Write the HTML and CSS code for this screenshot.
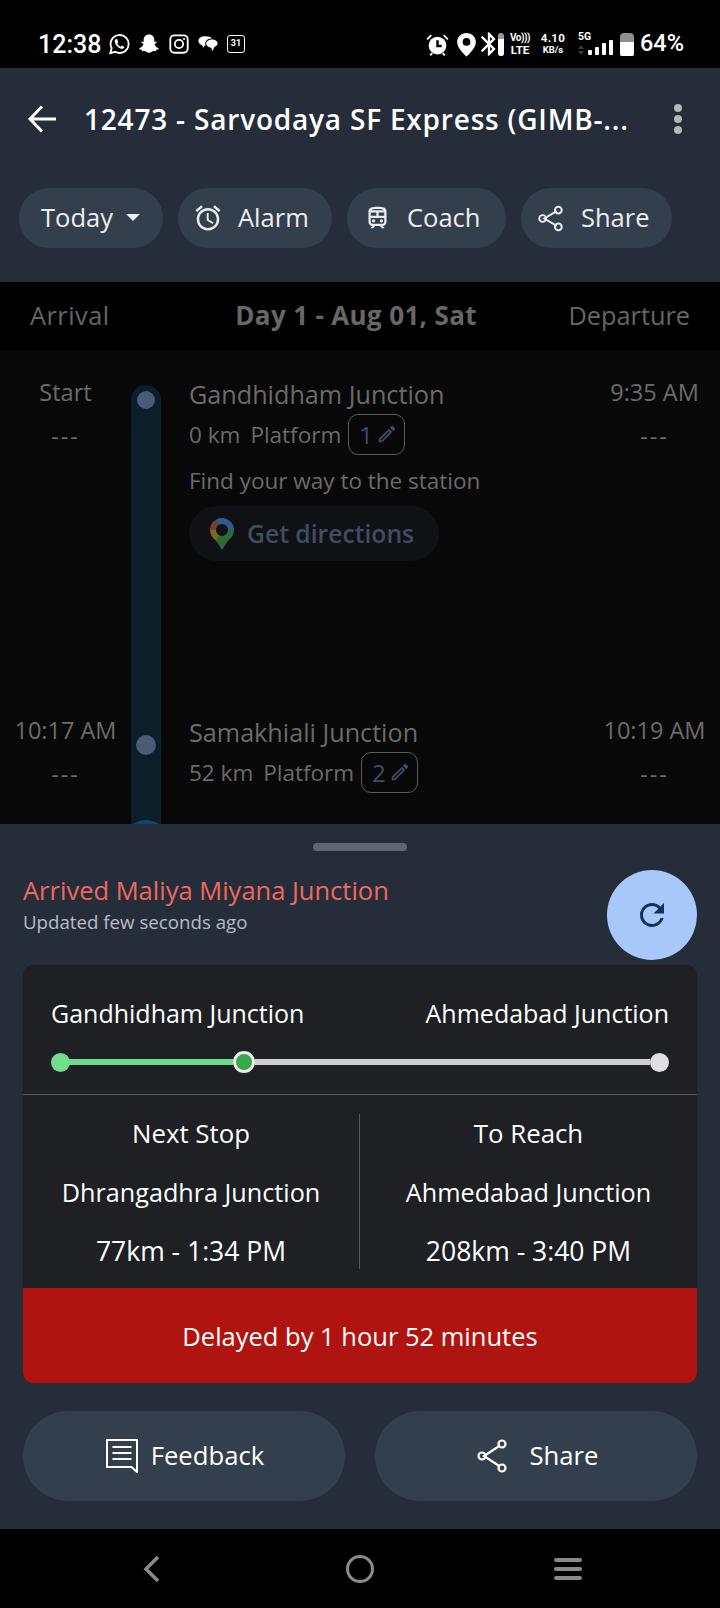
FILE: index.html
```html
<!DOCTYPE html>
<html lang="en">
<head>
<meta charset="utf-8">
<title>12473 - Sarvodaya SF Express</title>
<link rel="stylesheet" href="styles.css">
</head>
<body>
<div class="screen">
  <header class="status">
    <div class="status-left">
      <span class="clock">12:38</span>
      <svg class="si si-wa" viewBox="0 0 24 24"><path class="ln" d="M2.500 22l1.500-5.400A9.800 9.800 0 1 1 7.800 20.500z"/><path class="fl" d="M9 6.500c-1 .3-1.900 1.400-1.700 3 .4 3.100 4.200 7.300 7.600 7.800 1.500.2 2.700-.7 3-1.900l-2.800-1.700-1.200 1.300c-1.600-.5-3.300-2.200-3.800-3.800l1.200-1.200L10 6.500z"/></svg>
      <svg class="si si-sc" viewBox="0 0 24 24"><path class="fl" d="M12 1.500c3.900 0 5.800 2.900 5.800 5.800v2.500l2-.5.6 1.300-2.400 1.400c.4 2 2.200 3.800 4.600 4.500l-.2 1.100-2.500.7-.6 1.600-2.700-.2c-1.400.5-2.500 2-4.600 2s-3.200-1.500-4.600-2l-2.700.2-.6-1.600-2.500-.7-.2-1.100c2.400-.7 4.200-2.500 4.600-4.500L3.600 10.600l.6-1.300 2 .5V7.300c0-2.900 1.900-5.800 5.800-5.800z"/></svg>
      <svg class="si si-ig" viewBox="0 0 24 24"><rect class="ln" x="2.500" y="2.500" width="19" height="19" rx="4.500"/><circle class="ln" cx="12" cy="12" r="4.500"/><circle class="fl" cx="17.500" cy="6.500" r="1.100"/></svg>
      <svg class="si si-ch" viewBox="0 0 24 24"><path class="fl" d="M9 3.500c-4.300 0-7.500 1.800-7.500 5 0 2.500 1.700 4 4 4.700L7 16l1.500-2.500c.3 0 .6.1 1 .1 0 0-.5-1-.5-2.100 0-3 3.200-5.600 7.500-5.700C15.500 4.300 12.500 3.500 9 3.500z"/><path class="fl" d="M16.500 7c-3.500 0-6.500 1.800-6.500 4.500 0 2.500 2.500 4.300 5.500 4.500l1.500 4 2-4.700c2-.8 3.500-2.100 3.500-3.800C22.500 8.800 20 7 16.500 7z"/></svg>
      <span class="cal">31</span>
    </div>
    <div class="status-right">
      <svg class="si si-al" viewBox="0 0 24 24"><path class="fl" d="M12 4.500a8.500 8.500 0 1 0 0 17 8.500 8.500 0 0 0 0-17z"/><path class="cut" d="M12 8v5.500h4"/><path class="ln" d="M2 7l4-4M22 7l-4-4M5 22.500l2-2.300M19 22.500l-2-2.300"/></svg>
      <svg class="si si-pin" viewBox="0 0 24 24"><path class="fl" fill-rule="evenodd" d="M12 1C6.900 1 3 4.900 3 9.800 3 16 12 23.500 12 23.500S21 16 21 9.800C21 4.900 17.100 1 12 1zm0 12.200a3.700 3.700 0 1 1 0-7.400 3.700 3.700 0 0 1 0 7.400z"/></svg>
      <svg class="si si-bt" viewBox="0 0 24 24"><path class="fl" d="M17.710 7.710L12 2h-1v7.590L6.410 5 5 6.410 10.590 12 5 17.590 6.410 19 11 14.410V22h1l5.710-5.710-4.300-4.290 4.300-4.290zM13 5.830l1.880 1.880L13 9.590V5.830zm1.880 10.460L13 18.170v-3.760l1.880 1.880z"/></svg>
      <span class="bt-batt"><span class="bt-level"></span></span>
      <span class="net-stack volte"><span>Vo)))</span><span>LTE</span></span>
      <span class="net-stack speed"><span class="sp-top">4.10</span><span>KB/s</span></span>
      <span class="sig">
        <span class="sig-label">5G</span>
        <span class="sig-bars">
          <svg class="arrows" viewBox="0 0 6 10"><path d="M3 0l3 4H0zM3 10L0 6h6z"/></svg>
          <i class="b1"></i><i class="b2"></i><i class="b3"></i><i class="b4"></i>
        </span>
      </span>
      <span class="battery"><span class="battery-level"></span></span>
      <span class="pct">64%</span>
    </div>
  </header>

  <section class="appbar">
    <div class="titlebar">
      <svg class="back" viewBox="0 0 30 30"><path d="M28.500 15H3M14.500 2.500L2.500 15l12 12.500"/></svg>
      <h1 class="title">12473 - Sarvodaya SF Express (GIMB-...</h1>
      <span class="kebab"><i></i><i></i><i></i></span>
    </div>
    <div class="chips">
      <div class="chip chip-today"><span>Today</span><i class="caret"></i></div>
      <div class="chip chip-alarm">
        <svg class="chip-ic" viewBox="0 0 24 24"><path d="M22 5.720l-4.600-3.860-1.290 1.530 4.600 3.860L22 5.720zM7.880 3.390L6.600 1.860 2 5.710l1.290 1.530 4.590-3.850zM12.500 8H11v6l4.750 2.850.75-1.230-4-2.370V8zM12 4c-4.970 0-9 4.030-9 9s4.020 9 9 9c4.970 0 9-4.030 9-9s-4.030-9-9-9zm0 16c-3.870 0-7-3.130-7-7s3.130-7 7-7 7 3.130 7 7-3.130 7-7 7z"/></svg>
        <span>Alarm</span>
      </div>
      <div class="chip chip-coach">
        <svg class="chip-ic" viewBox="0 0 24 24"><path d="M12 2c-4 0-8 .5-8 4v9.500C4 17.430 5.570 19 7.500 19L6 20.500v.5h2l2-2h4l2 2h2v-.5L16.500 19c1.930 0 3.500-1.570 3.500-3.500V6c0-3.500-3.580-4-8-4zm0 2c3.510 0 4.960.48 5.500 1h-11c.54-.52 1.990-1 5.500-1zM6 7h5v3H6V7zm12 8.500c0 .83-.67 1.500-1.500 1.500h-9c-.83 0-1.500-.67-1.500-1.500V12h12v3.500zm0-5.500h-5V7h5v3z"/><circle cx="8.500" cy="14.500" r="1.500"/><circle cx="15.500" cy="14.500" r="1.500"/></svg>
        <span>Coach</span>
      </div>
      <div class="chip chip-share">
        <svg class="chip-ic share-ic" viewBox="0 0 24 24"><path d="M17.500 5.500L6.500 12l11 6.500"/><circle cx="19" cy="4.500" r="3"/><circle cx="5" cy="12" r="3"/><circle cx="19" cy="19.500" r="3"/></svg>
        <span>Share</span>
      </div>
    </div>
  </section>

  <div class="dayhead">
    <span class="arrival">Arrival</span>
    <strong>Day 1 - Aug 01, Sat</strong>
    <span>Departure</span>
  </div>

  <section class="timeline">
    <article class="stop stop-first">
      <div class="times"><span>Start</span><span class="dash">---</span></div>
      <div class="rail rail-first"><i class="dot"></i></div>
      <div class="info">
        <div class="name">Gandhidham Junction</div>
        <div class="meta"><span>0 km</span><span>Platform</span>
          <span class="pf">1<svg class="pencil" viewBox="0 0 24 24"><path d="M14.060 9.020l.92.92L5.920 19H5v-.92l9.060-9.060M17.660 3c-.25 0-.51.1-.7.29l-1.830 1.830 3.750 3.750 1.830-1.830c.39-.39.39-1.020 0-1.410l-2.340-2.340c-.2-.2-.45-.29-.71-.29zm-3.600 3.190L3 17.250V21h3.750L17.810 9.940l-3.750-3.750z"/></svg></span>
        </div>
        <div class="find">Find your way to the station</div>
        <div class="directions">
          <svg class="gpin" viewBox="0 0 24 32">
            <path class="g-green" d="M3 18l9 14 9-14z"/>
            <path class="g-red" d="M3 12A9 9 0 0 1 7 4.500"/>
            <path class="g-blue" d="M7 4.500A9 9 0 0 1 21 12"/>
            <path class="g-yellow" d="M3 12A9 9 0 0 0 8 20"/>
            <path class="g-green2" d="M8 20A9 9 0 0 0 21 12"/>
          </svg>
          <span>Get directions</span>
        </div>
      </div>
      <div class="times times-r"><span>9:35 AM</span><span class="dash">---</span></div>
    </article>
    <article class="stop stop-second">
      <div class="times"><span>10:17 AM</span><span class="dash">---</span></div>
      <div class="rail"><i class="dot dot-b"></i><i class="next-head"></i></div>
      <div class="info">
        <div class="name">Samakhiali Junction</div>
        <div class="meta"><span>52 km</span><span>Platform</span>
          <span class="pf">2<svg class="pencil" viewBox="0 0 24 24"><path d="M14.060 9.020l.92.92L5.920 19H5v-.92l9.060-9.060M17.660 3c-.25 0-.51.1-.7.29l-1.830 1.830 3.750 3.750 1.830-1.830c.39-.39.39-1.020 0-1.410l-2.340-2.340c-.2-.2-.45-.29-.71-.29zm-3.600 3.190L3 17.250V21h3.750L17.810 9.940l-3.750-3.750z"/></svg></span>
        </div>
      </div>
      <div class="times times-r"><span>10:19 AM</span><span class="dash">---</span></div>
    </article>
  </section>

  <section class="sheet">
    <div class="handle"></div>
    <div class="sheet-head">
      <div>
        <div class="arrived">Arrived Maliya Miyana Junction</div>
        <div class="updated">Updated few seconds ago</div>
      </div>
      <button class="refresh" type="button"><svg viewBox="0 0 24 24"><path d="M17.650 6.350C16.200 4.900 14.210 4 12 4c-4.420 0-7.990 3.580-7.990 8s3.570 8 7.990 8c3.730 0 6.840-2.550 7.730-6h-2.080c-.82 2.330-3.040 4-5.650 4-3.310 0-6-2.690-6-6s2.690-6 6-6c1.660 0 3.140.69 4.220 1.780L13 11h7V4l-2.350 2.350z"/></svg></button>
    </div>

    <div class="card">
      <div class="route">
        <div class="route-names"><span>Gandhidham Junction</span><span>Ahmedabad Junction</span></div>
        <div class="progress">
          <i class="p-start"></i><i class="p-done"></i><i class="p-now"></i><i class="p-left"></i><i class="p-end"></i>
        </div>
      </div>
      <div class="summary">
        <div class="col"><span class="lbl">Next Stop</span><span>Dhrangadhra Junction</span><span class="eta">77km - 1:34 PM</span></div>
        <div class="col"><span class="lbl">To Reach</span><span>Ahmedabad Junction</span><span class="eta">208km - 3:40 PM</span></div>
      </div>
      <div class="delay">Delayed by 1 hour 52 minutes</div>
    </div>

    <div class="actions">
      <button class="action" type="button">
        <svg class="fb-ic" viewBox="0 0 32 34"><path d="M1 1h30v32l-5.500-5H1z"/><path d="M6.500 8h19M6.500 14h19M6.500 20h19"/></svg>
        <span>Feedback</span>
      </button>
      <button class="action" type="button">
        <svg class="sh-ic" viewBox="0 0 30 34"><path d="M23 6.500L7 17l16 10.500"/><circle cx="25" cy="5" r="3.500"/><circle cx="5" cy="17" r="3.500"/><circle cx="25" cy="29" r="3.500"/></svg>
        <span>Share</span>
      </button>
    </div>
  </section>

  <nav class="navbar">
    <svg class="nav-back" viewBox="0 0 18 28"><path d="M15 2L3 14l12 12"/></svg>
    <i class="nav-home"></i>
    <span class="nav-menu"><i></i><i></i><i></i></span>
  </nav>
</div>
</body>
</html>
```

FILE: styles.css
```css
* { box-sizing: border-box; margin: 0; padding: 0; }
html, body { background: #000; }
body { font-family: "Open Sans", "Noto Sans", sans-serif; color: #fff; }
i { display: block; }
.screen { width: 720px; height: 1608px; display: flex; flex-direction: column; overflow: hidden; }

/* status bar */
.status { height: 68px; flex: none; background: #000; display: flex; justify-content: space-between; padding: 26px 38px 0 38px; }
.status-left, .status-right { display: flex; align-items: center; height: 36px; }
.clock { font: 500 25px/1 Roboto, sans-serif; margin-right: 9px; width: 61px; white-space: nowrap; }
.si { display: block; flex: none; }
.fl { fill: #fff; }
.ln { fill: none; stroke: #fff; stroke-width: 2; }
.cut { fill: none; stroke: #000; stroke-width: 2.400; }
.si-wa { width: 22px; height: 22px; margin-right: 8px; }
.si-sc { width: 22px; height: 22px; margin-right: 8px; }
.si-ig { width: 22px; height: 22px; margin-right: 7px; }
.si-ch { width: 22px; height: 22px; margin-right: 8px; }
.cal { width: 18px; height: 18px; border: 1.500px solid #fff; border-radius: 3px; font: 700 9px/15px Roboto, sans-serif; text-align: center; }
.si-al { width: 25px; height: 25px; margin-right: 4px; }
.si-al .ln { stroke-width: 1.800; }
.si-pin { width: 25px; height: 25px; margin-right: -4px; }
.si-bt { width: 28px; height: 30px; margin-right: -5px; }
.bt-batt { width: 6px; height: 23px; background: #9a9a9a; border-radius: 3px; display: flex; align-items: flex-end; overflow: hidden; margin-right: 6px; }
.bt-level { width: 100%; height: 17px; background: #fff; }
.net-stack { display: flex; flex-direction: column; align-items: center; font: 700 11px/12px Roboto, sans-serif; }
.volte { width: 20px; margin-right: 9px; font-size: 10px; letter-spacing: -.5px; white-space: nowrap; }
.volte span:last-child { font-size: 11.500px; letter-spacing: 0; }
.speed { width: 28px; margin-right: 11px; font-size: 9.500px; }
.sp-top { font-size: 11.500px; letter-spacing: .3px; }
.sig { display: flex; flex-direction: column; width: 35px; margin-right: 7px; height: 24px; }
.sig-label { font: 700 10.500px/10px Roboto, sans-serif; }
.sig-bars { display: flex; align-items: flex-end; gap: 3px; height: 14px; margin-top: -1px; }
.sig-bars i { width: 4px; background: #fff; border-radius: 1px; flex: none; }
.arrows { width: 6px; height: 10px; fill: #3a3a3a; margin-right: 1px; flex: none; }
.b1 { height: 5px; } .b2 { height: 8px; } .b3 { height: 12px; } .b4 { height: 15px; }
.battery { width: 14px; height: 23px; background: #8e8e8e; border-radius: 4px 4px 2px 2px; display: flex; align-items: flex-end; overflow: hidden; margin-right: 6px; }
.battery-level { width: 100%; height: 14px; background: #fff; }
.pct { font: 500 23.500px/1 Roboto, sans-serif; width: 42px; white-space: nowrap; }

/* app bar */
.appbar { height: 214px; flex: none; background: #252d3b; padding: 0 19px; }
.titlebar { height: 104px; display: flex; align-items: center; padding: 0 0 2px 8px; }
.back { width: 31px; height: 30px; fill: none; stroke: #fff; stroke-width: 3; flex: none; margin-right: 26px; }
.title { font-size: 28px; font-weight: 600; line-height: 36px; white-space: nowrap; flex: 1; letter-spacing: .8px; overflow: hidden; }
.kebab { width: 8px; margin: 0 19px 0 4px; display: flex; flex-direction: column; gap: 3px; flex: none; }
.kebab i { width: 8px; height: 8px; border-radius: 50%; background: #b3b6bb; }
.chips { display: flex; gap: 15px; margin-top: 16px; }
.chip { height: 60px; border-radius: 30px; background: #343f4d; display: flex; align-items: center; font-size: 25.500px; color: #eceef0; padding-bottom: 2px; }
.chip-today { width: 144px; padding-left: 22px; }
.chip-alarm { width: 154px; padding-left: 15px; }
.chip-coach { width: 159px; padding-left: 17px; }
.chip-share { width: 151px; padding-left: 16px; }
.caret { width: 0; height: 0; border-left: 7px solid transparent; border-right: 7px solid transparent; border-top: 7px solid #eceef0; margin-left: 13px; }
.chip-ic { width: 30px; height: 30px; fill: #eceef0; flex: none; margin-right: 15px; margin-top: 2px; }
.chip-coach .chip-ic { width: 27px; margin-right: 16px; }
.share-ic { fill: none; stroke: #eceef0; stroke-width: 1.700; width: 27px; height: 27px; margin-right: 17px; }

/* day header */
.dayhead { height: 68px; flex: none; background: #000; display: flex; align-items: center; justify-content: space-between; padding: 0 30px 3px; font-size: 25.300px; color: #666; }
.arrival { letter-spacing: .5px; }
.dayhead strong { font-weight: 700; font-size: 26px; letter-spacing: .35px; color: #676767; margin-left: 34px; }

/* timeline */
.timeline { height: 474px; flex: none; background: #080808; overflow: hidden; }
.stop { display: grid; grid-template-columns: 131px 30px 28px 1fr 118px; color: #6b6b6b; }
.stop .times:first-child { grid-column: 1; }
.stop .rail { grid-column: 2; }
.stop .info { grid-column: 4; }
.stop .times-r { grid-column: 5; }
.stop-first { height: 338px; }
.stop-second { height: 180px; }
.times { display: flex; flex-direction: column; align-items: center; font-size: 23.500px; line-height: 30px; padding-top: 27px; gap: 14px; white-space: nowrap; }
.times-r { align-items: center; padding-right: 13px; }
.dash { letter-spacing: 2px; }
.rail { background: #0b1f2b; display: flex; flex-direction: column; align-items: center; overflow: visible; }
.rail-first { margin-top: 35px; border-radius: 15px 15px 0 0; padding-top: 6px; }
.dot { width: 18px; height: 18px; border-radius: 50%; background: #4c5a75; }
.dot-b { width: 20px; height: 20px; margin-top: 47px; }
.next-head { width: 44px; height: 44px; flex: none; border-radius: 50%; background: #0d4a63; margin-top: 65px; }
.info { padding-top: 28px; }
.name { font-size: 25.200px; line-height: 32px; }
.meta { display: flex; align-items: center; gap: 10px; font-size: 22.500px; height: 42px; margin-top: 3px; }
.pf { display: flex; align-items: center; gap: 3px; height: 41px; margin-left: -3px; padding: 0 6px 0 10px; border: 1.500px solid #5a5a5a; border-radius: 10px; color: #3f4c66; font-size: 24px; }
.pencil { width: 22px; height: 22px; fill: #3f4c66; }
.find { font-size: 22.500px; line-height: 30px; margin-top: 11px; }
.directions { width: 250px; height: 55px; margin-top: 10px; border-radius: 28px; background: #0f1114; display: flex; align-items: center; padding-left: 21px; gap: 13px; color: #3f4c66; font-size: 24.700px; font-weight: 600; }
.gpin { width: 24px; height: 32px; fill: none; stroke-width: 6; flex: none; }
.g-green { fill: #2a6b38; stroke: none; }
.g-red { stroke: #7d3a30; }
.g-blue { stroke: #2f5a8a; }
.g-yellow { stroke: #79691f; }
.g-green2 { stroke: #2a6b38; }

/* bottom sheet */
.sheet { height: 705px; flex: none; background: #252d3b; padding: 19px 23px 0; display: flex; flex-direction: column; }
.handle { width: 94px; height: 8px; border-radius: 4px; background: #5f6670; align-self: center; flex: none; }
.sheet-head { display: flex; justify-content: space-between; height: 114px; padding-top: 19px; flex: none; }
.arrived { font-size: 25.500px; line-height: 32px; color: #ee6a5e; margin-top: 4px; }
.updated { font-size: 18.700px; line-height: 26px; color: #b7bdc8; margin-top: 3px; }
.refresh { width: 90px; height: 90px; border: 0; border-radius: 50%; background: #a8c8fa; display: flex; align-items: center; justify-content: center; flex: none; }
.refresh svg { width: 36px; height: 36px; fill: #0d3559; }
.card { height: 418px; flex: none; background: #1e2023; border-radius: 10px; overflow: hidden; display: flex; flex-direction: column; }
.route { height: 130px; flex: none; padding: 31px 28px 0; border-bottom: 1.500px solid #58595b; }
.route-names { display: flex; justify-content: space-between; font-size: 25px; line-height: 34px; }
.progress { display: flex; align-items: center; height: 24px; margin-top: 20px; }
.p-start { width: 19px; height: 19px; border-radius: 50%; background: #72dc8f; flex: none; }
.p-done { width: 164px; height: 6px; background: #6edb8b; margin-left: -1px; flex: none; }
.p-now { width: 22px; height: 22px; border-radius: 50%; background: #37a94c; border: 3px solid #eee; flex: none; }
.p-left { flex: 1; height: 6px; background: #cfcfcf; }
.p-end { width: 19px; height: 19px; border-radius: 50%; background: #e0e0e0; flex: none; }
.summary { height: 193px; flex: none; display: grid; grid-template-columns: 1fr 1fr; padding: 19px 0; }
.col { display: flex; flex-direction: column; align-items: center; justify-content: space-between; font-size: 25.200px; line-height: 34px; height: 155px; padding: 2px 0 0; }
.col:first-child { border-right: 1.500px solid #58595b; }
.col .lbl { font-size: 25.800px; }
.col .eta { font-size: 26.500px; margin-bottom: 1px; }
.delay { flex: 1; background: #b01410; display: flex; align-items: center; justify-content: center; font-size: 25.500px; font-weight: 500; }
.actions { display: grid; grid-template-columns: 322px 322px; justify-content: space-between; margin-top: 28px; }
.action { height: 90px; border: 0; border-radius: 45px; background: #343f4d; color: #fff; font-family: inherit; font-size: 25.700px; font-weight: 500; display: flex; align-items: center; justify-content: center; padding-bottom: 2px; }
.fb-ic { width: 32px; height: 34px; fill: none; stroke: #fff; stroke-width: 2; margin: 2px 13px 0 2px; }
.sh-ic { width: 30px; height: 34px; fill: none; stroke: #fff; stroke-width: 2.200; margin: 2px 22px 0 4px; }

/* nav bar */
.navbar { flex: 1; background: #000; display: flex; align-items: center; justify-content: space-between; padding: 0 138px; }
.nav-back { width: 28px; height: 28px; fill: none; stroke: #8a8a8a; stroke-width: 3.500; }
.nav-home { width: 28px; height: 28px; border-radius: 50%; border: 3.500px solid #8a8a8a; }
.nav-menu { display: flex; flex-direction: column; gap: 5px; width: 28px; }
.nav-menu i { height: 4px; border-radius: 2px; background: #8a8a8a; }
```
